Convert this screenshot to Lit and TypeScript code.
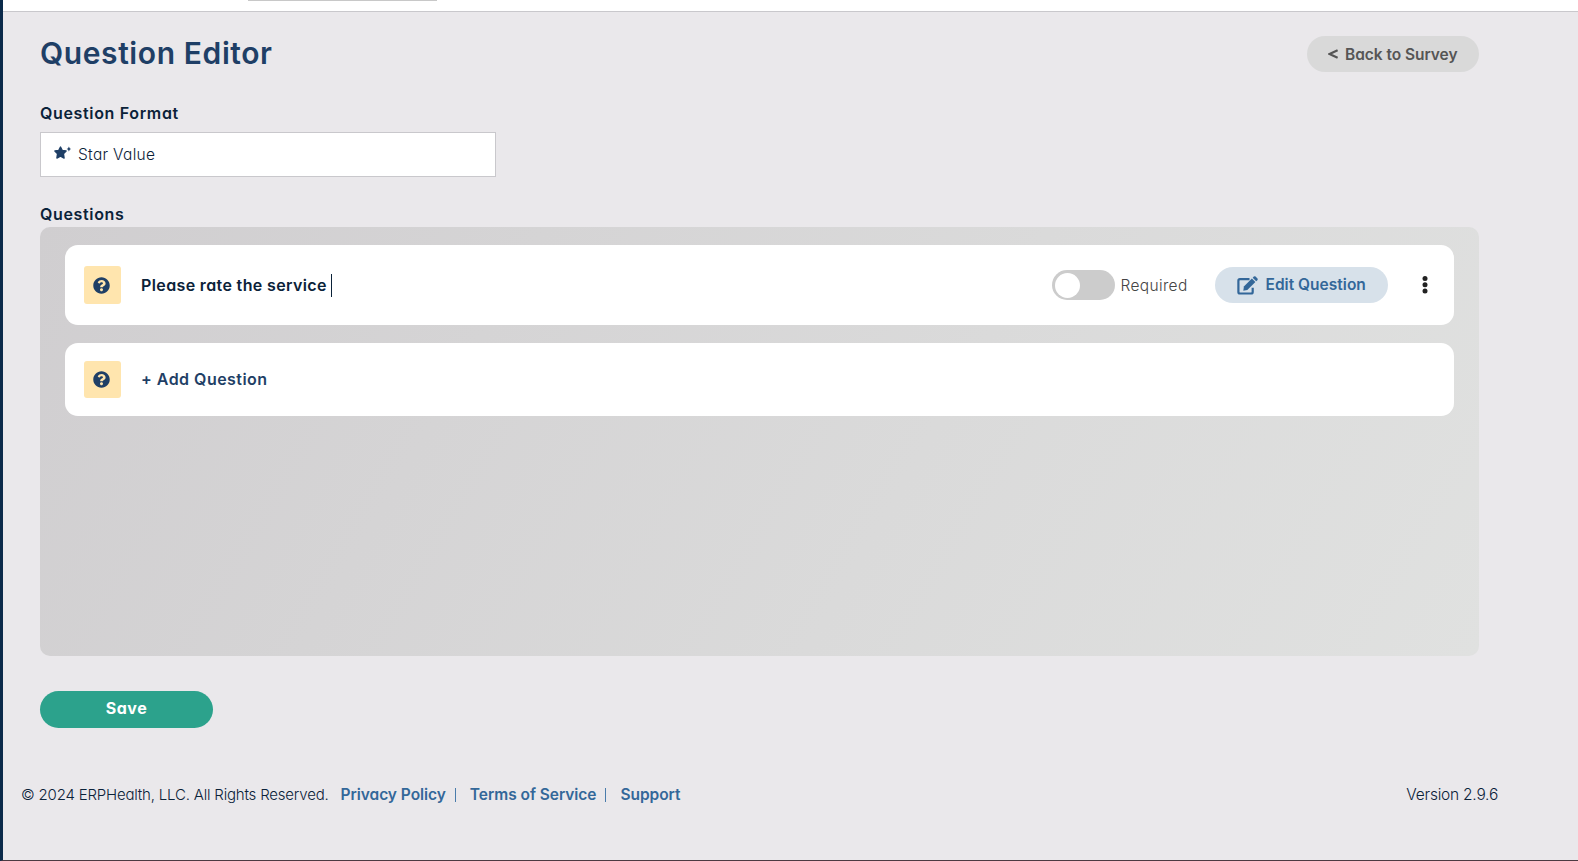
import { LitElement, html, css, svg } from "lit";
import { customElement, property, state } from "lit/decorators.js";

@customElement("question-icon")
class QuestionIcon extends LitElement {
  static styles = css`
    :host {
      display: flex;
      align-items: center;
      justify-content: center;
      width: 37.5px;
      height: 37.5px;
      flex: none;
      border-radius: 3px;
      background: #ffe5ae;
    }
    svg {
      width: 17px;
      height: 17px;
      display: block;
      margin-left: -1px;
    }
  `;
  render() {
    return html`<svg viewBox="0 0 512 512">
      <path fill="#1f3f66" d="M504 256c0 137-111 248-248 248S8 393 8 256C8 119.100 119 8 256 8s248 111.100 248 248zM262.700 90c-54.500 0-89.300 23-116.500 63.800-3.500 5.300-2.400 12.400 2.700 16.300l34.700 26.300c5.200 3.900 12.600 3 16.700-2.100 17.900-22.700 30.100-35.800 57.300-35.800 20.400 0 45.700 13.100 45.700 33 0 15-12.400 22.700-32.500 34C247.100 238.500 216 254.900 216 296v4c0 6.600 5.400 12 12 12h56c6.600 0 12-5.400 12-12v-1.300c0-28.500 83.200-29.600 83.200-106.700 0-58-60.200-102-116.500-102zM256 338c-25.400 0-46 20.600-46 46s20.600 46 46 46 46-20.600 46-46-20.600-46-46-46z"/>
    </svg>`;
  }
}

@customElement("toggle-switch")
class ToggleSwitch extends LitElement {
  @property({ type: Boolean }) on = false;
  static styles = css`
    .track {
      display: flex;
      box-sizing: border-box;
      width: 63px;
      height: 30px;
      padding: 2.5px 3px;
      border-radius: 15px;
      background: #ccc;
    }
    .track.on {
      justify-content: flex-end;
    }
    .knob {
      width: 25px;
      height: 25px;
      border-radius: 50%;
      background: #fff;
    }
  `;
  render() {
    return html`<div class="track ${this.on ? "on" : ""}"><div class="knob"></div></div>`;
  }
}

@customElement("app-root")
class AppRoot extends LitElement {
  @state() question = "Please rate the service";

  static styles = css`
    :host {
      display: block;
      font-family: Inter, "Open Sans", sans-serif;
      font-feature-settings: "cv11";
      color: #0b2239;
    }
    .shell {
      box-sizing: border-box;
      display: flex;
      flex-direction: column;
      height: 861px;
      overflow: hidden;
      background: #eae8eb;
      border-left: 3px solid #0b2a4a;
      border-bottom: 1px solid #4c3a42;
      white-space: nowrap;
    }
    .topbar {
      box-sizing: border-box;
      flex: none;
      height: 12px;
      background: #fff;
      border-bottom: 1px solid #c9c8cc;
    }
    .search {
      width: 189px;
      height: 1px;
      margin-left: 245px;
      background: #c8c8c8;
    }
    main {
      display: flex;
      flex-direction: column;
      align-items: flex-start;
      width: 1439px;
      padding: 24px 0 0 37px;
    }
    .head {
      display: flex;
      justify-content: space-between;
      align-self: stretch;
      height: 36px;
    }
    h1 {
      margin: 0;
      font-size: 30px;
      font-weight: 600;
      line-height: 34px;
      letter-spacing: 0.6px;
      color: #1f3f66;
    }
    .back {
      box-sizing: border-box;
      display: flex;
      width: 172px;
      height: 36px;
      padding-left: 21px;
      border-radius: 18px;
      background: #d9d9d9;
      color: #555;
      font-size: 15.5px;
      font-weight: 600;
      line-height: 37px;
      letter-spacing: -0.04px;
    }
    .back svg {
      width: 10px;
      height: 10px;
      margin: 13px 7px 0 0;
    }
    label {
      font-size: 16px;
      font-weight: 600;
      line-height: 24px;
      letter-spacing: 0.66px;
    }
    .format {
      margin-top: 29px;
    }
    .select {
      box-sizing: border-box;
      display: flex;
      width: 456px;
      height: 45px;
      margin-top: 7px;
      padding-left: 13px;
      border: 1px solid #c9c8cc;
      background: #fff;
      font-size: 15.5px;
      font-weight: 300;
      line-height: 44px;
      letter-spacing: 0.3px;
    }
    .select svg {
      width: 17px;
      height: 15px;
      margin: 12px 7px 0 0;
    }
    .questions {
      margin-top: 25px;
    }
    .panel {
      box-sizing: border-box;
      display: flex;
      flex-direction: column;
      gap: 18px;
      align-self: stretch;
      height: 429px;
      margin-top: 1px;
      padding: 18px 25px;
      border-radius: 10px;
      background: linear-gradient(120deg, #d0ced0, #dadada 60%, #e0e1e0);
    }
    .card {
      box-sizing: border-box;
      display: flex;
      align-items: center;
      height: 80px;
      padding: 0 26px 0 18.6px;
      border-radius: 13px;
      background: #fff;
      font-size: 16px;
      font-weight: 600;
    }
    .card.add {
      height: 73px;
      color: #1f3f66;
    }
    .text {
      margin-left: 20px;
      line-height: 24px;
      letter-spacing: 0.36px;
    }
    .add .text {
      letter-spacing: 0.46px;
      padding-bottom: 2px;
    }
    .caret {
      width: 1px;
      height: 23px;
      margin-left: 4px;
      background: #0b2239;
    }
    toggle-switch {
      margin-left: auto;
    }
    .required {
      width: 94px;
      padding: 1px 0 0 5.500px;
      font-size: 15.5px;
      font-weight: 300;
      letter-spacing: 0.35px;
      color: #444;
    }
    .edit {
      box-sizing: border-box;
      display: flex;
      width: 173px;
      height: 36px;
      padding-left: 22px;
      border-radius: 18px;
      background: #d7e1ea;
      color: #336799;
      font-size: 15.5px;
      font-weight: 600;
      line-height: 36px;
      letter-spacing: 0.02px;
    }
    .edit svg {
      width: 21px;
      height: 19px;
      margin: 8.500px 8px 0 0;
      overflow: visible;
    }
    .dots {
      width: 6px;
      height: 18px;
      margin-left: 34.500px;
      margin-right: 0;
    }
    .save {
      width: 173px;
      height: 37px;
      margin-top: 35px;
      border-radius: 18.5px;
      background: #2ca28c;
      color: #fff;
      font-size: 16px;
      font-weight: 650;
      line-height: 34px;
      letter-spacing: 0.5px;
      text-align: center;
    }
    footer {
      display: flex;
      width: 1477px;
      margin: 55px 0 0 18px;
      font-size: 15px;
      font-weight: 300;
      line-height: 24px;
    }
    .copy {
      width: 319.5px;
      letter-spacing: -0.19px;
    }
    a {
      font-size: 15.5px;
      font-weight: 600;
      letter-spacing: -0.04px;
      color: #336799;
    }
    .sep {
      width: 1px;
      height: 14px;
      margin: 5px 14px 0 9px;
      background: #4a7cab;
    }
    .version {
      margin-left: auto;
      font-size: 15.5px;
      letter-spacing: -0.22px;
    }
  `;

  render() {
    return html`
      <div class="shell">
        <div class="topbar"><div class="search"></div></div>
        <main>
          <div class="head">
            <h1>Question Editor</h1>
            <div class="back">
              <svg viewBox="0 0 10 10"><path d="M9.600 1.200L1.600 5L9.600 8.800" fill="none" stroke="#555" stroke-width="2.100"/></svg>
              <span>Back to Survey</span>
            </div>
          </div>
          <label class="format">Question Format</label>
          <div class="select">
            <svg viewBox="0 0 17 15">
              <path fill="#1f3f66" stroke="#1f3f66" stroke-width="1.400" stroke-linejoin="round" d="M6.500 2.100L8.300 5.500L12.100 6L9.400 8.700L10.100 13L6.500 11.200L2.900 13L3.600 8.700L.9 6L4.700 5.500Z"/>
              <path fill="#1f3f66" d="M14.900 1.400L15.700 3.200L17 4L15.700 4.800L14.900 6.600L14.100 4.800L12.600 4L14.100 3.200Z"/>
            </svg>
            <span>Star Value</span>
          </div>
          <label class="questions">Questions</label>
          <div class="panel">
            <div class="card">
              <question-icon></question-icon>
              <span class="text">${this.question}</span>
              <div class="caret"></div>
              <toggle-switch></toggle-switch>
              <span class="required">Required</span>
              <div class="edit">
                <svg viewBox="0 0 21 19">
                  <path d="M12.500 3.200H2.900Q1.400 3.200 1.400 4.700V16Q1.400 17.500 2.900 17.500H14.200Q15.700 17.500 15.700 16V11.800" fill="none" stroke="#336799" stroke-width="2.200"/>
                  <path d="M14.900 2.500L18.400 6L10.300 14L6.300 14.700L6.900 10.500Z" fill="#336799"/>
                  <path d="M15.700 1.700L16.800.6Q17.700-.2 18.600.6L20.400 2.400Q21.200 3.300 20.400 4.200L19.200 5.300Z" fill="#336799"/>
                </svg>
                <span>Edit Question</span>
              </div>
              <svg class="dots" viewBox="0 0 6 18">
                ${[2.600, 8.800, 15].map((y) => svg`<circle cx="3" cy=${y} r="2.500" fill="#222"/>`)}
              </svg>
            </div>
            <div class="card add">
              <question-icon></question-icon>
              <span class="text">+ Add Question</span>
            </div>
          </div>
          <div class="save">Save</div>
        </main>
        <footer>
          <span class="copy">© 2024 ERPHealth, LLC. All Rights Reserved.</span>
          <a>Privacy Policy</a><i class="sep"></i>
          <a>Terms of Service</a><i class="sep"></i>
          <a>Support</a>
          <span class="version">Version 2.9.6</span>
        </footer>
      </div>
    `;
  }
}
